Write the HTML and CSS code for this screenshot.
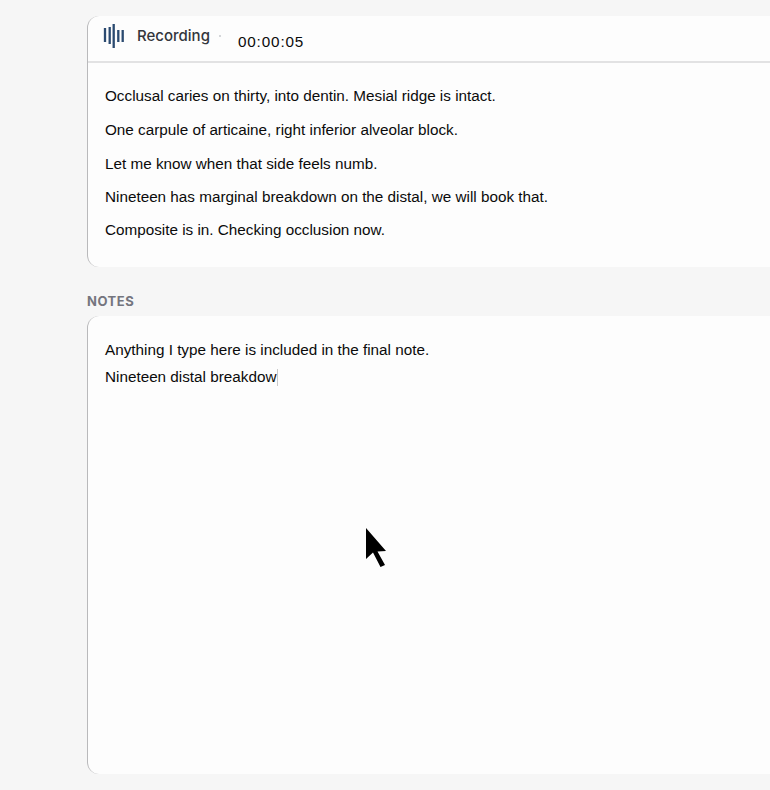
FILE: index.html
```html
<!DOCTYPE html>
<html lang="en">
<head>
<meta charset="utf-8">
<title>Recording</title>
<link rel="stylesheet" href="styles.css">
</head>
<body>
<main class="page">
  <section class="card transcript-card">
    <header class="rec-bar">
      <svg class="wave" width="22" height="24" viewBox="0 0 22 24" aria-hidden="true">
        <path d="M2 4v14M6.700 3v17M10.700 0v24M15.300 6v12M19.700 6v12" />
      </svg>
      <span class="rec-label">Recording</span>
      <span class="rec-dot"></span>
      <span class="rec-time">00:00:05</span>
    </header>
    <div class="transcript">
      <p>Occlusal caries on thirty, into dentin. Mesial ridge is intact.</p>
      <p>One carpule of articaine, right inferior alveolar block.</p>
      <p>Let me know when that side feels numb.</p>
      <p>Nineteen has marginal breakdown on the distal, we will book that.</p>
      <p>Composite is in. Checking occlusion now.</p>
    </div>
  </section>
  <h2 class="section-label">NOTES</h2>
  <section class="card notes-card">
    <p>Anything I type here is included in the final note.</p>
    <p>Nineteen distal breakdow<span class="caret"></span></p>
  </section>
</main>
<svg class="cursor" width="24" height="42" viewBox="0 0 24 42" aria-hidden="true">
  <path d="M1 1L21 24L12.500 24.500L20 38L15.500 40L8 25.500L1 32Z" />
</svg>
</body>
</html>
```
FILE: styles.css
```css
html, body {
  margin: 0;
  height: 100%;
  overflow: hidden;
  background: #f6f6f6;
}
body {
  font-family: "Liberation Sans", Arial, sans-serif;
  color: #0b0b0b;
  font-size: 15.270px;
  position: relative;
}
.page {
  padding: 16px 0 0 87px;
  display: flex;
  flex-direction: column;
}
.card {
  box-sizing: border-box;
  background: #fdfdfd;
  border: 0 solid transparent;
  border-left: 1px solid #b9b9bb;
  border-radius: 12px 0 0 12px;
}
.transcript-card { height: 251px; }
.rec-bar {
  box-sizing: border-box;
  height: 47px;
  border-bottom: 2px solid #e2e2e3;
  display: flex;
  align-items: flex-start;
  padding-left: 15px;
}
.wave {
  margin-top: 8px;
  fill: none;
  stroke: #2b4a70;
  stroke-width: 2.300;
}
.rec-label {
  margin: 11px 0 0 12px;
  font-family: Inter, sans-serif;
  font-size: 15px;
  font-weight: 500;
  line-height: 18px;
  color: #33363c;
}
.rec-dot {
  width: 2px;
  height: 2px;
  margin: 19px 0 0 9px;
  border-radius: 50%;
  background: #c6c8cc;
}
.rec-time {
  margin: 17px 0 0 17px;
  line-height: 18px;
  letter-spacing: .85px;
}
.transcript { padding: 24px 0 0 17px; }
.transcript p {
  margin: 0 0 16px;
  line-height: 18px;
  white-space: nowrap;
}
.transcript p:nth-child(n+3) { margin-bottom: 15px; }
.section-label {
  margin: 26px 0 7px;
  font-family: Inter, sans-serif;
  font-size: 13px;
  line-height: 16px;
  font-weight: 700;
  letter-spacing: .55px;
  color: #74757e;
}
.notes-card {
  height: 458px;
  padding: 25px 0 0 17px;
}
.notes-card p {
  margin: 0 0 9px;
  line-height: 18px;
  white-space: nowrap;
}
.caret {
  display: inline-block;
  width: 1px;
  height: 17px;
  margin-left: 1px;
  vertical-align: -4px;
  background: #c9c9c9;
}
.cursor {
  position: absolute;
  left: 365px;
  top: 527px;
  fill: #000;
}
```
